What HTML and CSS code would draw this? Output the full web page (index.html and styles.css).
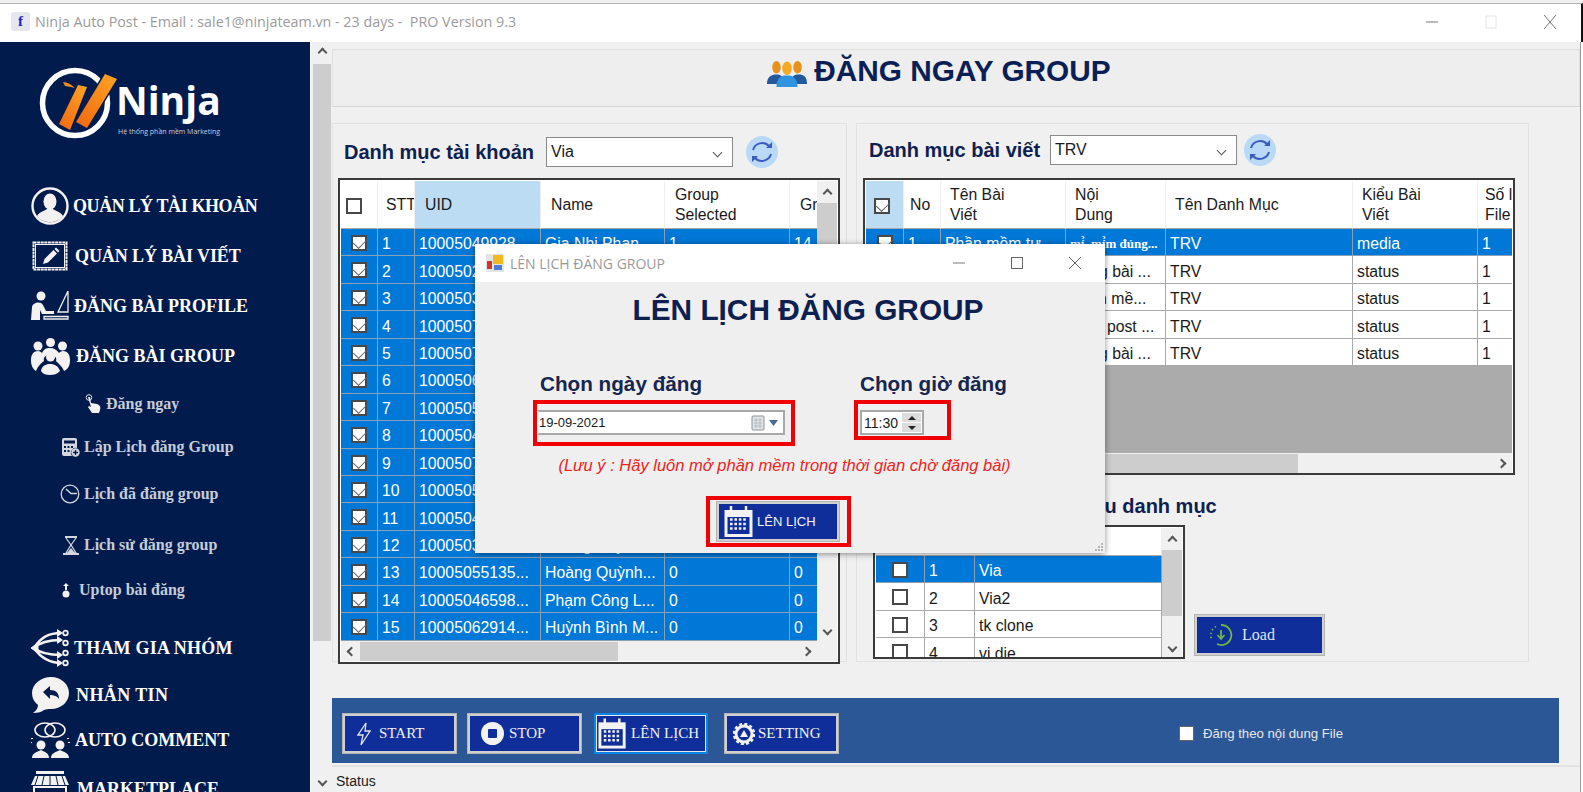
FILE: index.html
```html
<!DOCTYPE html>
<html lang="en">
<head>
    <meta charset="UTF-8">
    <title>Ninja Auto Post</title>
    <link rel="stylesheet" href="styles.css">
</head>
<body>
    <div class="titlebar">
        <span class="fb-icon">f</span>
        <span class="titlebar-text">Ninja Auto Post - Email : sale1@ninjateam.vn - 23 days -&nbsp; PRO Version 9.3</span>
        <div class="win-btns">
            <svg width="14" height="14" viewBox="0 0 14 14"><path d="M1 7h12" stroke="#8a8a8a" stroke-width="1.2"/></svg>
            <svg width="14" height="14" viewBox="0 0 14 14"><rect x="2" y="1" width="10" height="12" fill="none" stroke="#e4e4e4"/></svg>
            <svg width="14" height="14" viewBox="0 0 14 14"><path d="M1 0l12 14M13 0L1 14" stroke="#777" fill="none"/></svg>
        </div>
    </div>

    <div class="app">
        <aside class="sidebar">
            <div class="logo">
                <svg width="80" height="72" viewBox="0 0 80 72">
                    <defs>
                        <linearGradient id="orange" x1="0" y1="1" x2="1" y2="0">
                            <stop offset="0" stop-color="#f2660f"/>
                            <stop offset="1" stop-color="#ffa524"/>
                        </linearGradient>
                    </defs>
                    <circle cx="36" cy="36" r="32.5" fill="none" stroke="#fff" stroke-width="5.5"/>
                    <path d="M66 7l12 5-30 49-11-6z" fill="url(#orange)" stroke="#021b4d" stroke-width="3" paint-order="stroke"/>
                    <path d="M39 18l9 2-17 43-11-6z" fill="url(#orange)"/>
                    <path d="M24 15c4 0 8 2 12 6-4-1-8-2-10-2z" fill="#f58a1f"/>
                </svg>
                <div class="logo-text">
                    <div class="logo-name">Ninja</div>
                    <div class="logo-sub">Hệ thống phần mềm Marketing</div>
                </div>
            </div>
            <nav class="nav">
                <a class="nav-item nav-acc">
                    <svg class="nav-icon" width="38" height="38" viewBox="0 0 38 38"><circle cx="19" cy="19" r="17.5" fill="none" stroke="#f4f1f1" stroke-width="2.4"/><ellipse cx="19" cy="14.5" rx="6.5" ry="8" fill="#f4f1f1"/><path d="M6 29c3-5 9-5 11-8h4c2 3 8 3 11 8-6 8-20 8-26 0z" fill="#f4f1f1"/></svg>
                    <span>QUẢN LÝ TÀI KHOẢN</span>
                </a>
                <a class="nav-item nav-post">
                    <svg class="nav-icon" width="38" height="32" viewBox="0 0 38 32"><rect x="2.5" y="2.5" width="33" height="27" fill="none" stroke="#f4f1f1" stroke-width="2" stroke-dasharray="3 .6"/><rect x="4.5" y="4.5" width="29" height="23" fill="#021b4d" stroke="#f4f1f1"/><path d="M12 24l1.500-5 9-9 3.500 3.500-9 9zM23.500 9l1.500-1.500 3.500 3.500-1.500 1.500z" fill="#f4f1f1"/></svg>
                    <span>QUẢN LÝ BÀI VIẾT</span>
                </a>
                <a class="nav-item">
                    <svg class="nav-icon" width="38" height="30" viewBox="0 0 38 30"><circle cx="10" cy="5" r="4.500" fill="#f4f1f1"/><path d="M0 29l1-13c1-5 9-6 11-2l3 6h8v3H11l-2-4v10z" fill="#f4f1f1"/><path d="M37 0L27 21h10zM13 25.500h24V28H13z" fill="none" stroke="#f4f1f1" stroke-width="1.300"/></svg>
                    <span>ĐĂNG BÀI PROFILE</span>
                </a>
                <a class="nav-item nav-group">
                    <svg class="nav-icon" width="39" height="38" viewBox="0 0 39 38"><circle cx="7" cy="9" r="4.500" fill="#f4f1f1"/><circle cx="19.500" cy="5.500" r="4.500" fill="#f4f1f1"/><circle cx="31.500" cy="9" r="4.500" fill="#f4f1f1"/><path d="M0 23c0-6 3-9 7-9 2 0 3 1 4 2 2-4 4-5 8-5s7 2 9 5c1-1 2-2 4-2 4 0 7 3 7 9 0 6-2 9-6 11-2-5-6-8-8-10 1-3-1-6-6-6s-7 3-6 6c-3 2-6 5-8 10-3-2-5-5-5-11z" fill="#f4f1f1"/><path d="M10 34c1-5 4-7 9-7s8 2 10 7c-3 3-6 4-10 4-4 0-7-1-9-4z" fill="#f4f1f1"/><circle cx="19.500" cy="20" r="4.500" fill="#f4f1f1"/></svg>
                    <span>ĐĂNG BÀI GROUP</span>
                </a>
                <a class="nav-item sub sub-ngay">
                    <svg class="sub-icon" width="17" height="20" viewBox="0 0 17 20"><circle cx="4" cy="3.500" r="2.800" fill="none" stroke="#dfe3ea"/><path d="M3 3h2l1 6 6 1c3 1 4 3 3 6l-1 3H7L3 13l1-1 2 1z" fill="#f4f1f1"/></svg>
                    <span>Đăng ngay</span>
                </a>
                <a class="nav-item sub sub-lap">
                    <svg class="sub-icon" width="18" height="19" viewBox="0 0 18 19"><path d="M0 2a2 2 0 012-2h11a2 2 0 012 2v8a5 5 0 00-5 8H2a2 2 0 01-2-2z" fill="#d3d8e0"/><path d="M2 2.500h11v3H2z" fill="#021b4d"/><path d="M2 8h2v2H2zM5.500 8h2v2h-2zM9 8h2v2H9zM2 12h2v2H2zM5.500 12h2v2h-2z" fill="#021b4d"/><circle cx="13.500" cy="14.500" r="4.200" fill="#d3d8e0"/><path d="M13.500 12v5M11 14.500h5" stroke="#021b4d" stroke-width="1.300"/></svg>
                    <span>Lập Lịch đăng Group</span>
                </a>
                <a class="nav-item sub sub-da">
                    <svg class="sub-icon" width="20" height="20" viewBox="0 0 20 20"><circle cx="10" cy="10" r="8.800" fill="none" stroke="#d3d8e0" stroke-width="1.300"/><path d="M6 5l5 4.500h6" fill="none" stroke="#d3d8e0" stroke-width="1.500"/></svg>
                    <span>Lịch đã đăng group</span>
                </a>
                <a class="nav-item sub sub-su">
                    <svg class="sub-icon" width="18" height="19" viewBox="0 0 18 19"><path d="M3 1h12M1 18h16" stroke="#d3d8e0" stroke-width="2"/><path d="M4 2l5 7 5-7M4 17l5-8 5 8z" fill="none" stroke="#d3d8e0" stroke-width="1.200"/><path d="M5 17l4-5 4 5z" fill="#d3d8e0"/></svg>
                    <span>Lịch sử đăng group</span>
                </a>
                <a class="nav-item sub sub-uptop">
                    <svg class="sub-icon" width="8" height="15" viewBox="0 0 8 15"><path d="M4 0l3 3H5v4H3V3H1z" fill="#f4f1f1"/><circle cx="4" cy="11" r="3.500" fill="#f4f1f1"/></svg>
                    <span>Uptop bài đăng</span>
                </a>
                <a class="nav-item nav-tham">
                    <svg class="nav-icon" width="38" height="38" viewBox="0 0 38 38" fill="none" stroke="#f4f1f1"><path d="M3 19C10 8 18 4 30 4M3 19c6-6 14-8 27-8M3 19c6 5 14 7 27 7M3 19c7 10 15 15 27 15" stroke-width="2.600"/><path d="M0 19l7-5v10z" fill="#f4f1f1"/><path d="M26 0l6 4-6 4zM26 7l6 4-6 4zM26 22l6 4-6 4zM26 30l6 4-6 4z" fill="#f4f1f1" stroke="none"/><circle cx="34.500" cy="4" r="2.300" stroke-width="1.800"/><circle cx="34.500" cy="14" r="2.300" stroke-width="1.800"/><circle cx="34.500" cy="24" r="2.300" stroke-width="1.800"/><circle cx="34.500" cy="34" r="2.300" stroke-width="1.800"/></svg>
                    <span>THAM GIA NHÓM</span>
                </a>
                <a class="nav-item nav-nhan">
                    <svg class="nav-icon" width="38" height="37" viewBox="0 0 38 37"><path d="M20 0c10 0 18 7 18 16S30 32 20 32c-3 0-5 0-7 1-2 2-6 3-11 3 3-2 5-5 5-8C3 25 1 21 1 16 1 7 10 0 20 0z" fill="#f4f1f1"/><path d="M12 15l7-6v4c6 0 9 3 9 9-2-3-5-4-9-4v4z" fill="#021b4d"/></svg>
                    <span>NHẮN TIN</span>
                </a>
                <a class="nav-item nav-comment">
                    <svg class="nav-icon" width="39" height="38" viewBox="0 0 39 38"><ellipse cx="14" cy="9" rx="10" ry="7" fill="none" stroke="#f4f1f1" stroke-width="1.600"/><ellipse cx="24" cy="9" rx="10" ry="7" fill="none" stroke="#f4f1f1" stroke-width="1.600"/><circle cx="10" cy="24" r="4.500" fill="#f4f1f1"/><circle cx="29" cy="24" r="4.500" fill="#f4f1f1"/><path d="M1 37c0-5 5-6 9-8 4 2 8 3 8 8zM20 37c0-5 5-6 9-8 4 2 9 3 9 8z" fill="#f4f1f1"/><path d="M1 17v1M0 21v1M37 17v1M38 21v1" stroke="#f4f1f1" stroke-width="2"/></svg>
                    <span>AUTO COMMENT</span>
                </a>
                <a class="nav-item nav-market">
                    <svg class="nav-icon" width="38" height="36" viewBox="0 0 38 36"><path d="M5 0h28v3H5zM4 5h30l4 9H0z" fill="#f4f1f1"/><path d="M7 5L4 14M13 5l-2 9M19 5v9M25 5l2 9M31 5l3 9" stroke="#021b4d"/><path d="M3 16h32v18H3z" fill="none" stroke="#f4f1f1" stroke-width="2"/></svg>
                    <span>MARKETPLACE</span>
                </a>
            </nav>
        </aside>

        <div class="page-scroll">
            <span class="chev chev-up"></span>
            <div class="page-thumb"></div>
            <span class="chev chev-down"></span>
        </div>

        <main class="main">
            <header class="page-header">
                <svg width="40" height="27" viewBox="0 0 38 26" preserveAspectRatio="none">
                    <path d="M0 23c0-6 3-8 7-9h4c3 1 5 3 5 9zM22 23c0-6 3-8 6-9h4c4 1 6 3 6 9z" fill="#235a9e"/>
                    <ellipse cx="9" cy="7" rx="4" ry="6" fill="#e8921c"/>
                    <ellipse cx="29" cy="7" rx="4" ry="6" fill="#e8921c"/>
                    <path d="M9 26c0-8 4-10 7-11h6c3 1 7 3 7 11z" fill="#2f93df"/>
                    <ellipse cx="19" cy="8" rx="4.500" ry="6.500" fill="#f4a922"/>
                </svg>
                <h1>ĐĂNG NGAY GROUP</h1>
            </header>

            <div class="panels">
                <section class="group group-left">
                    <div class="filter">
                        <label class="filter-label label-acc">Danh mục tài khoản</label>
                        <div class="combo"><span>Via</span><span class="chev chev-down"></span></div>
                        <svg class="refresh" width="32" height="32" viewBox="0 0 32 32"><circle cx="16" cy="16" r="16" fill="#b9d9f7"/><path d="M7 14a9.500 9.500 0 0116-4M25 18a9.500 9.500 0 01-16 4" fill="none" stroke="#3a5cc0" stroke-width="2"/><path d="M26 6v6h-6zM6 26v-6h6z" fill="#3a5cc0"/></svg>
                    </div>
                    <div class="grid grid-acc">
                        <div class="grid-view">
                            <table class="tbl tbl-acc">
                                <thead>
                                    <tr><th><span class="cb"></span></th><th class="th-stt">STT</th><th class="th-on">UID</th><th>Name</th><th>Group<br>Selected</th><th>Group</th></tr>
                                </thead>
                                <tbody>
                                    <tr class="on"><td><span class="cb ok"></span></td><td>1</td><td>10005049928</td><td>Gia Nhi Phan</td><td>1</td><td>14</td></tr>
                                    <tr class="on"><td><span class="cb ok"></span></td><td>2</td><td>10005021430...</td><td>Trần Văn Nam</td><td>0</td><td>0</td></tr>
                                    <tr class="on"><td><span class="cb ok"></span></td><td>3</td><td>10005037126...</td><td>Lê Thu Hà</td><td>0</td><td>0</td></tr>
                                    <tr class="on"><td><span class="cb ok"></span></td><td>4</td><td>10005071852...</td><td>Nguyễn Minh</td><td>0</td><td>0</td></tr>
                                    <tr class="on"><td><span class="cb ok"></span></td><td>5</td><td>10005073361...</td><td>Phạm Anh</td><td>0</td><td>0</td></tr>
                                    <tr class="on"><td><span class="cb ok"></span></td><td>6</td><td>10005069247...</td><td>Vũ Hoa</td><td>0</td><td>0</td></tr>
                                    <tr class="on"><td><span class="cb ok"></span></td><td>7</td><td>10005058814...</td><td>Đỗ Linh</td><td>0</td><td>0</td></tr>
                                    <tr class="on"><td><span class="cb ok"></span></td><td>8</td><td>10005040693...</td><td>Bùi Tâm</td><td>0</td><td>0</td></tr>
                                    <tr class="on"><td><span class="cb ok"></span></td><td>9</td><td>10005075120...</td><td>Hồ Quân</td><td>0</td><td>0</td></tr>
                                    <tr class="on"><td><span class="cb ok"></span></td><td>10</td><td>10005052278...</td><td>Ngô Mai</td><td>0</td><td>0</td></tr>
                                    <tr class="on"><td><span class="cb ok"></span></td><td>11</td><td>10005044906...</td><td>Đặng Sơn</td><td>0</td><td>0</td></tr>
                                    <tr class="on"><td><span class="cb ok"></span></td><td>12</td><td>10005036581...</td><td>Hoàng Huy</td><td>0</td><td>0</td></tr>
                                    <tr class="on"><td><span class="cb ok"></span></td><td>13</td><td>10005055135...</td><td>Hoàng Quỳnh...</td><td>0</td><td>0</td></tr>
                                    <tr class="on"><td><span class="cb ok"></span></td><td>14</td><td>10005046598...</td><td>Phạm Công L...</td><td>0</td><td>0</td></tr>
                                    <tr class="on"><td><span class="cb ok"></span></td><td>15</td><td>10005062914...</td><td>Huỳnh Bình M...</td><td>0</td><td>0</td></tr>
                                </tbody>
                            </table>
                        </div>
                        <div class="scroll-v">
                            <span class="chev chev-up"></span>
                            <div class="thumb-v thumb-acc"></div>
                            <span class="chev chev-down"></span>
                        </div>
                        <div class="scroll-h">
                            <span class="chev chev-left"></span>
                            <div class="thumb-h thumb-h-acc"></div>
                            <span class="chev chev-right"></span>
                        </div>
                    </div>
                </section>

                <section class="group group-right">
                    <div class="filter filter-post">
                        <label class="filter-label label-post">Danh mục bài viết</label>
                        <div class="combo combo-post"><span>TRV</span><span class="chev chev-down"></span></div>
                        <svg class="refresh" width="32" height="32" viewBox="0 0 32 32"><circle cx="16" cy="16" r="16" fill="#b9d9f7"/><path d="M7 14a9.500 9.500 0 0116-4M25 18a9.500 9.500 0 01-16 4" fill="none" stroke="#3a5cc0" stroke-width="2"/><path d="M26 6v6h-6zM6 26v-6h6z" fill="#3a5cc0"/></svg>
                    </div>
                    <div class="grid grid-post">
                        <div class="grid-view">
                            <table class="tbl tbl-post">
                                <thead>
                                    <tr><th class="th-on"><span class="cb ok"></span></th><th>No</th><th>Tên Bài<br>Viết</th><th>Nội<br>Dung</th><th>Tên Danh Mục</th><th>Kiểu Bài<br>Viết</th><th>Số lượng<br>File</th></tr>
                                </thead>
                                <tbody>
                                    <tr class="on"><td><span class="cb ok"></span></td><td>1</td><td>Phần mềm tự</td><td class="odd-font">mỉ̉. mỉ̉m đủng...</td><td>TRV</td><td>media</td><td>1</td></tr>
                                    <tr><td><span class="cb ok"></span></td><td>2</td><td>Đăng bài</td><td>Đăng bài ...</td><td>TRV</td><td>status</td><td>1</td></tr>
                                    <tr><td><span class="cb ok"></span></td><td>3</td><td>Phần mềm</td><td>Phần mề...</td><td>TRV</td><td>status</td><td>1</td></tr>
                                    <tr><td><span class="cb ok"></span></td><td>4</td><td>Auto post</td><td>Auto post ...</td><td>TRV</td><td>status</td><td>1</td></tr>
                                    <tr><td><span class="cb ok"></span></td><td>5</td><td>Đăng bài</td><td>Đăng bài ...</td><td>TRV</td><td>status</td><td>1</td></tr>
                                </tbody>
                            </table>
                        </div>
                        <div class="scroll-h">
                            <span class="chev chev-left"></span>
                            <div class="thumb-h thumb-h-post"></div>
                            <span class="chev chev-right"></span>
                        </div>
                    </div>

                    <div class="filter-label label-list">Lấy dữ liệu danh mục</div>
                    <div class="list-row">
                        <div class="grid grid-list">
                            <div class="grid-view">
                                <table class="tbl tbl-list">
                                    <thead>
                                        <tr><th><span class="cb"></span></th><th>STT</th><th>Tên</th></tr>
                                    </thead>
                                    <tbody>
                                        <tr class="on"><td><span class="cb"></span></td><td>1</td><td>Via</td></tr>
                                        <tr><td><span class="cb"></span></td><td>2</td><td>Via2</td></tr>
                                        <tr><td><span class="cb"></span></td><td>3</td><td>tk clone</td></tr>
                                        <tr><td><span class="cb"></span></td><td>4</td><td>vi die</td></tr>
                                    </tbody>
                                </table>
                            </div>
                            <div class="scroll-v">
                                <span class="chev chev-up"></span>
                                <div class="thumb-v thumb-list"></div>
                                <span class="chev chev-down"></span>
                            </div>
                        </div>
                        <button class="btn btn-load">
                            <svg width="24" height="24" viewBox="0 0 24 24" fill="none" stroke="#6fb83f"><path d="M12 2a10 10 0 11-4 19" stroke-width="1.800"/><path d="M7 3.500A10 10 0 003 17" stroke-width="1.800" stroke-dasharray="1.500 2.500"/><path d="M12 7v8M8.500 12l3.500 4 3.500-4" stroke-width="1.800"/></svg>
                            Load
                        </button>
                    </div>
                </section>
            </div>

            <div class="toolbar">
                <button class="btn tool-btn">
                    <svg width="14" height="24" viewBox="0 0 14 24" fill="none" stroke="#dfe3f2" stroke-width="1.300"><path d="M9 1L1 13h5L4 23l9-14H8z"/></svg>
                    START
                </button>
                <button class="btn tool-btn btn-stop">
                    <svg width="23" height="23" viewBox="0 0 23 23"><circle cx="11.500" cy="11.500" r="11.500" fill="#f2f2f2"/><rect x="7" y="7" width="9" height="9" rx="1" fill="#0f2e99"/></svg>
                    STOP
                </button>
                <button class="btn tool-btn btn-focus">
                    <svg width="31" height="33" viewBox="0 0 31 33"><use href="#calendar"/></svg>
                    LÊN LỊCH
                </button>
                <button class="btn tool-btn btn-setting">
                    <svg width="22" height="22" viewBox="0 0 22 22"><circle cx="11" cy="11" r="8" fill="none" stroke="#f2f2f2" stroke-width="3"/><circle cx="11" cy="11" r="10" fill="none" stroke="#f2f2f2" stroke-width="2.500" stroke-dasharray="3 2.240"/><path d="M11 7l4 7H7z" fill="#f2f2f2"/></svg>
                    SETTING
                </button>
                <label class="toolbar-check"><span class="cb plain"></span>Đăng theo nội dung File</label>
            </div>

            <div class="status">Status</div>
        </main>
    </div>

    <div class="dialog">
        <div class="dialog-title">
            <svg width="18" height="18" viewBox="0 0 18 18"><rect width="18" height="18" fill="#e4e4e4"/><rect x="7" y="1" width="10" height="9" fill="#f0b923"/><rect x="1" y="7" width="5" height="8" fill="#d2352b"/><rect x="8" y="11" width="8" height="5" fill="#4d7fd1"/></svg>
            <span>LÊN LỊCH ĐĂNG GROUP</span>
            <div class="win-btns dialog-btns">
                <svg width="14" height="14" viewBox="0 0 14 14"><path d="M1 7h12" stroke="#777"/></svg>
                <svg width="14" height="14" viewBox="0 0 14 14"><rect x="1.500" y="1.500" width="11" height="11" fill="none" stroke="#666"/></svg>
                <svg width="14" height="14" viewBox="0 0 14 14"><path d="M1 1l12 12M13 1L1 13" stroke="#666" fill="none"/></svg>
            </div>
        </div>
        <div class="dialog-body">
            <h2>LÊN LỊCH ĐĂNG GROUP</h2>
            <div class="dialog-fields">
                <div class="field field-date">
                    <div class="field-label">Chọn ngày đăng</div>
                    <div class="red-box date-box">
                        <div class="date-input">
                            <span>19-09-2021</span>
                            <svg width="28" height="16" viewBox="0 0 28 16"><rect x="1" y="1" width="12" height="14" rx="1" fill="#dfe3e8" stroke="#8c939c"/><path d="M3 5h8M3 8h8M3 11h8M5 3v10M9 3v10" stroke="#aab0b8" stroke-width=".7"/><path d="M18 5h9l-4.500 6z" fill="#4a6a96"/></svg>
                        </div>
                    </div>
                </div>
                <div class="field field-time">
                    <div class="field-label">Chọn giờ đăng</div>
                    <div class="red-box time-box">
                        <div class="time-input">
                            <span>11:30</span>
                            <div class="spinner"><span class="spin spin-up"></span><span class="spin spin-down"></span></div>
                        </div>
                    </div>
                </div>
            </div>
            <p class="note">(Lưu ý : Hãy luôn mở phần mềm trong thời gian chờ đăng bài)</p>
            <div class="red-box schedule-box">
                <button class="btn btn-schedule">
                    <svg width="31" height="33" viewBox="0 0 31 33">
                        <g id="calendar">
                            <rect x="1.500" y="5" width="28" height="27" fill="#f2f2f2"/>
                            <rect x="4.500" y="12" width="22" height="17" fill="#0f2e99"/>
                            <path d="M8 1v6M23 1v6" stroke="#f2f2f2" stroke-width="2.500"/>
                            <path d="M7 14.500h17M7 19h17M7 23.500h17" stroke="#f2f2f2" stroke-width="2.600" stroke-dasharray="2.600 1.800"/>
                        </g>
                    </svg>
                    LÊN LỊCH
                </button>
            </div>
        </div>
        <svg class="grip" width="9" height="9" viewBox="0 0 9 9" fill="#b5b5b5"><rect x="6" y="0" width="2" height="2"/><rect x="3" y="3" width="2" height="2"/><rect x="6" y="3" width="2" height="2"/><rect x="0" y="6" width="2" height="2"/><rect x="3" y="6" width="2" height="2"/><rect x="6" y="6" width="2" height="2"/></svg>
    </div>
</body>
</html>
```

FILE: styles.css
```css
* {
    box-sizing: border-box;
}
html, body {
    margin: 0;
    width: 1583px;
    height: 792px;
    overflow: hidden;
}
body {
    position: relative;
    background-color: #fff;
    font-family: "Liberation Sans", Arial, sans-serif;
    color: #1a1a1a;
    border-top: 3px solid #f0f0f0;
}

/* title bar */
.titlebar {
    display: flex;
    align-items: center;
    height: 39px;
    padding: 0 0 3px 11px;
    background-color: #fff;
    border-top: 1px solid #b4b4b4;
    border-right: 2px solid #111;
}
.fb-icon {
    width: 19px;
    height: 19px;
    margin-right: 5px;
    border-radius: 3px;
    background-color: #e6e6ee;
    text-align: center;
    font: bold 15px/19px "Liberation Serif", serif;
    color: #1d22c9;
}
.titlebar-text {
    font-family: "Open Sans", sans-serif;
    font-size: 14.300px;
    color: #9b9b9b;
}
.win-btns {
    display: flex;
    gap: 45px;
    margin-left: auto;
    padding-right: 24px;
}

/* app layout */
.app {
    display: flex;
    height: 750px;
}
.sidebar {
    flex: none;
    width: 310px;
    padding: 25px 0 0 31px;
    background-color: #021b4d;
    overflow: hidden;
}
.logo {
    display: flex;
    margin-left: 8px;
    height: 72px;
}
.logo-text {
    margin-left: -3px;
    padding-top: 14px;
    color: #fff;
}
.logo-name {
    font: bold 39px/38px "Open Sans", sans-serif;
}
.logo-sub {
    margin: 8px 0 0 2px;
    font: 7px/10px "Open Sans", sans-serif;
    color: #c9ced8;
    white-space: nowrap;
}
.nav {
    display: flex;
    flex-direction: column;
    margin-top: 49px;
}
.nav-item {
    display: flex;
    align-items: center;
    gap: 5px;
    height: 36px;
    margin-bottom: 14px;
    font: bold 18px "Liberation Serif", serif;
    color: #fff;
    white-space: nowrap;
}
.nav-acc {
    gap: 4px;
    letter-spacing: -0.4px;
}
.nav-post {
    gap: 6px;
    letter-spacing: -0.1px;
}
.nav-group {
    gap: 6px;
    margin-bottom: 12px;
}
.nav-icon {
    flex: none;
}
.sub {
    font-size: 16px;
    color: #c6ccd8;
    gap: 4px;
}
.sub-ngay {
    padding-left: 54px;
    margin-bottom: 7px;
}
.sub-lap {
    padding-left: 31px;
    margin-bottom: 11px;
}
.sub-da {
    padding-left: 29px;
    margin-bottom: 15px;
}
.sub-su {
    padding-left: 31px;
    margin-bottom: 9px;
}
.sub-uptop {
    padding-left: 31px;
    gap: 9px;
    margin-bottom: 22px;
}
.nav-tham {
    margin-bottom: 11px;
    letter-spacing: 0.2px;
}
.nav-nhan {
    gap: 7px;
    margin-bottom: 9px;
    letter-spacing: 0.4px;
}
.nav-comment {
    margin-bottom: 13px;
}
.nav-market {
    gap: 8px;
}

/* page scrollbar */
.page-scroll {
    flex: none;
    display: flex;
    flex-direction: column;
    align-items: center;
    width: 21px;
    padding-left: 2px;
    border-left: 1px solid #fff;
    background-color: #f0f0f0;
}
.page-thumb {
    width: 18px;
    height: 577px;
    background-color: #cdcdcd;
}
.page-scroll .chev-up {
    margin: 7px 0 8px;
}
.page-scroll .chev-down {
    margin-top: 137px;
}

/* chevrons */
.chev {
    flex: none;
    display: block;
    width: 7px;
    height: 7px;
    border-style: solid;
    border-color: #555;
    border-width: 2px 0 0 2px;
}
.chev-up {
    transform: rotate(45deg);
}
.chev-down {
    transform: rotate(225deg);
}
.chev-left {
    transform: rotate(-45deg);
}
.chev-right {
    transform: rotate(135deg);
}

/* main */
.main {
    flex: none;
    width: 1250px;
    padding-left: 1px;
    background-color: #f0f0f0;
    border-right: 1px solid #999;
}
.page-header {
    display: flex;
    align-items: flex-start;
    justify-content: center;
    gap: 7px;
    height: 58px;
    margin-top: 7px;
    padding: 9px 34px 0 0;
    background-color: #eeeeee;
    border: 1px solid #e0e0e0;
    border-bottom-color: #d4d4d4;
}
.page-header svg {
    margin-top: 1px;
}
.page-header h1 {
    margin: 0;
    font-size: 29.800px;
    line-height: 24px;
    font-weight: bold;
    color: #0a1f55;
}
.panels {
    display: flex;
    gap: 9px;
    height: 539px;
    margin-top: 16px;
}
.group {
    border: 1px solid #e2e2e2;
}
.group-left {
    flex: none;
    width: 515px;
    padding-left: 5px;
}
.group-right {
    flex: none;
    width: 673px;
    padding-left: 6px;
}
.filter {
    display: flex;
    align-items: center;
    gap: 13px;
    height: 32px;
    margin-top: 12px;
}
.filter-post {
    margin-top: 10px;
}
.filter-label {
    margin-left: 6px;
    font-size: 20px;
    font-weight: bold;
    color: #0f1f4f;
    white-space: nowrap;
}
.label-acc {
    width: 189px;
}
.label-post {
    width: 168px;
}
.combo {
    display: flex;
    align-items: center;
    justify-content: space-between;
    width: 187px;
    height: 30px;
    padding: 0 11px 0 4px;
    background-color: #fff;
    border: 1px solid #8a8a8a;
    font-size: 16px;
}
.combo .chev {
    width: 7px;
    height: 7px;
    border-width: 1px 0 0 1px;
}
.filter-post .refresh {
    margin-left: -6px;
}

/* data grids */
.grid {
    display: grid;
    padding: 1px;
    background-color: #fff;
    border: 2px solid #3a3a3a;
    overflow: hidden;
}
.grid-view {
    overflow: hidden;
    min-width: 0;
}
.grid-acc {
    grid-template-columns: 1fr 20px;
    grid-template-rows: 460px 20px;
    width: 502px;
    height: 486px;
    margin-top: 10px;
}
.grid-post {
    grid-template-columns: 1fr;
    grid-template-rows: 272px 20px;
    width: 652px;
    height: 297px;
    margin-top: 12px;
}
.grid-post .grid-view {
    background-color: #ababab;
}
.grid-post .scroll-h {
    grid-column: 1;
}
.grid-list {
    grid-template-columns: 1fr 20px;
    grid-template-rows: 130px;
    flex: none;
    width: 312px;
    height: 134px;
}
.tbl {
    table-layout: fixed;
    border-collapse: separate;
    border-spacing: 0;
    font-size: 15.800px;
}
.tbl-acc {
    width: 529px;
}
.tbl-post {
    width: 672px;
}
.tbl-list {
    width: 286px;
}
.tbl-acc th:nth-child(1) { width: 37px; }
.tbl-acc th:nth-child(2) { width: 37px; }
.tbl-acc th:nth-child(3) { width: 126px; }
.tbl-acc th:nth-child(4) { width: 124px; }
.tbl-acc th:nth-child(5) { width: 125px; }
.tbl-post th:nth-child(1) { width: 38px; }
.tbl-post th:nth-child(2) { width: 37px; }
.tbl-post th:nth-child(3) { width: 125px; }
.tbl-post th:nth-child(4) { width: 100px; }
.tbl-post th:nth-child(5) { width: 187px; }
.tbl-post th:nth-child(6) { width: 125px; }
.tbl-list th:nth-child(1) { width: 49px; }
.tbl-list th:nth-child(2) { width: 50px; }
.tbl th {
    height: 48px;
    padding: 0 0 0 10px;
    background-color: #fff;
    border-right: 1px solid #eee;
    border-bottom: 1px solid #a8a8a8;
    font-weight: normal;
    line-height: 19.500px;
    text-align: left;
    overflow: hidden;
    white-space: nowrap;
}
.tbl-post th {
    padding-left: 9px;
}
.tbl-post th:nth-child(2) {
    padding-left: 6px;
}
.tbl-post th:nth-child(7) {
    padding-left: 7px;
}
.tbl th.th-on {
    background-color: #bcdcf4;
}
.tbl td {
    height: 27.450px;
    padding: 4px 0 0 4px;
    background-color: #fff;
    border-right: 1px solid #a8a8a8;
    border-bottom: 1px solid #a8a8a8;
    line-height: 20px;
    overflow: hidden;
    white-space: nowrap;
}
.tbl tr.on td {
    background-color: #0078d7;
    color: #fff;
    border-color: #8aa0b4;
}
.tbl td:first-child, .tbl th:first-child {
    padding: 0;
    text-align: center;
}
.tbl-acc th:first-child {
    padding-right: 10px;
}
.tbl-post th:first-child {
    padding-right: 6px;
}
.tbl th.th-stt {
    padding-left: 8px;
}
.tbl td.odd-font {
    font: bold 13px "Liberation Serif", serif;
}
.tbl-list th {
    height: 28px;
}
.cb {
    display: inline-block;
    position: relative;
    width: 16px;
    height: 16px;
    vertical-align: middle;
    background-color: #fff;
    border: 2px solid #484848;
}
.cb.ok::after {
    content: "";
    position: absolute;
    left: 3px;
    top: -1px;
    width: 7px;
    height: 11px;
    border: solid #666;
    border-width: 0 1.500px 1.500px 0;
    transform: rotate(45deg);
}
.cb.plain {
    flex: none;
    width: 15px;
    height: 15px;
    border: 1px solid #666;
    margin-right: 9px;
}

/* scrollbars */
.scroll-v {
    display: flex;
    flex-direction: column;
    align-items: center;
    background-color: #f0f0f0;
}
.scroll-v .chev-up {
    margin: 9px 0 6px;
}
.thumb-v {
    width: 20px;
    background-color: #cdcdcd;
}
.thumb-acc {
    height: 220px;
}
.scroll-v .chev-down {
    margin-top: auto;
    margin-bottom: 7px;
}
.thumb-list {
    height: 66px;
}
.scroll-h {
    display: flex;
    align-items: center;
    background-color: #f0f0f0;
    grid-column: 1 / 3;
    padding-left: 7px;
}
.thumb-h {
    height: 19px;
    margin-left: 5px;
    background-color: #cdcdcd;
}
.thumb-h-acc {
    width: 258px;
}
.thumb-h-post {
    width: 413px;
}
.scroll-h .chev-right {
    margin-left: auto;
    margin-right: 27px;
}
.grid-post .scroll-h .chev-right {
    margin-right: 7px;
}

/* third block */
.label-list {
    margin: 19px 0 0 147px;
    line-height: 24px;
}
.list-row {
    display: flex;
    align-items: flex-end;
    gap: 9px;
    margin: 7px 0 0 10px;
}

/* buttons */
.btn {
    display: flex;
    align-items: center;
    background-color: #0f2e99;
    border: 3px solid #d0d0d0;
    outline: 1px solid #b4b4b4;
    outline-offset: -1px;
    font: 15px "Liberation Serif", serif;
    color: #f2f2f2;
    white-space: nowrap;
}
.btn-load {
    width: 131px;
    height: 42px;
    margin-bottom: 3px;
    padding-left: 12px;
    gap: 9px;
    font-size: 16px;
    color: #dfe3f2;
}
.toolbar {
    display: flex;
    align-items: center;
    width: 1227px;
    height: 65px;
    margin-top: 36px;
    padding: 6px 0 0 10px;
    background-color: #2b5797;
}
.tool-btn {
    flex: none;
    width: 115px;
    height: 41px;
    margin-right: 10px;
    padding-left: 12px;
    gap: 8px;
}
.btn-stop {
    padding-left: 11px;
    gap: 5px;
}
.btn-focus {
    width: 114px;
    margin: 0 16px 0 2px;
    padding-left: 0;
    gap: 4px;
    border-color: #0a84e6;
    outline: 1px solid #e8e8e8;
    outline-offset: -3px;
}
.btn-setting {
    padding-left: 6px;
    gap: 3px;
}
.toolbar-check {
    display: flex;
    align-items: center;
    margin-left: 330px;
    font-size: 13.200px;
    color: #e8e8e8;
}
.status {
    height: 27px;
    padding: 6px 0 0 4px;
    border-top: 2px solid #e2e2e2;
    margin-top: 2px;
    font-size: 14px;
}

/* dialog */
.dialog {
    position: absolute;
    left: 475px;
    top: 241px;
    display: flex;
    flex-direction: column;
    width: 630px;
    height: 309px;
    background-color: #efefef;
    box-shadow: 0 1px 6px rgba(0, 0, 0, 0.45);
}
.dialog-title {
    display: flex;
    align-items: center;
    gap: 6px;
    height: 38px;
    padding-left: 11px;
    background-color: #fff;
    font-family: "Open Sans", sans-serif;
    font-size: 14px;
    color: #9a9a9a;
}
.dialog-btns {
    gap: 44px;
    padding-right: 23px;
}
.dialog-body {
    display: flex;
    flex-direction: column;
    align-items: center;
}
.dialog-body h2 {
    margin: 15px 0 0 36px;
    font-size: 29.800px;
    line-height: 26px;
    color: #0e2050;
}
.dialog-fields {
    display: flex;
    align-self: flex-start;
    margin: 48px 0 0 58px;
}
.field-label {
    height: 25px;
    margin-bottom: 4px;
    padding-left: 7px;
    font-size: 20.700px;
    font-weight: bold;
    line-height: 25px;
    color: #17264f;
    white-space: nowrap;
}
.field-date {
    width: 321px;
}
.red-box {
    border: 4px solid #f00000;
}
.date-box {
    width: 262px;
    height: 46px;
    padding-top: 6px;
}
.date-input {
    display: flex;
    align-items: center;
    justify-content: space-between;
    width: 248px;
    height: 25px;
    padding: 0 4px 0 0;
    background-color: #fff;
    border: 2px solid #a8a8a8;
    border-left-color: #fff;
    font-size: 13px;
}
.field-time .field-label {
    padding-left: 6px;
}
.time-box {
    width: 97px;
    height: 40px;
    padding: 6px 0 0 2px;
}
.time-input {
    display: flex;
    align-items: center;
    justify-content: space-between;
    width: 64px;
    height: 25px;
    padding: 0 1px 0 2px;
    background-color: #fff;
    border: 2px solid #a8a8a8;
    font-size: 14px;
}
.spinner {
    display: flex;
    flex-direction: column;
    gap: 1px;
    width: 19px;
    height: 19px;
    background-color: #fff;
}
.spin {
    flex: 1;
    display: flex;
    align-items: center;
    justify-content: center;
    background-color: #dcdcdc;
}
.spin::after {
    content: "";
    border-left: 4px solid transparent;
    border-right: 4px solid transparent;
}
.spin-up::after {
    border-bottom: 4px solid #222;
}
.spin-down::after {
    border-top: 4px solid #222;
}
.note {
    margin: 9px 0 0 -11px;
    font-size: 16.500px;
    font-style: italic;
    line-height: 20px;
    color: #f32020;
}
.schedule-box {
    width: 145px;
    height: 51px;
    margin: 21px 0 0 -23px;
    padding: 1px 0 0 6px;
}
.btn-schedule {
    width: 124px;
    height: 41px;
    padding-left: 4px;
    gap: 3px;
    font: 13px "Liberation Sans", sans-serif;
}
.grip {
    position: absolute;
    right: 1px;
    bottom: 1px;
}
```
